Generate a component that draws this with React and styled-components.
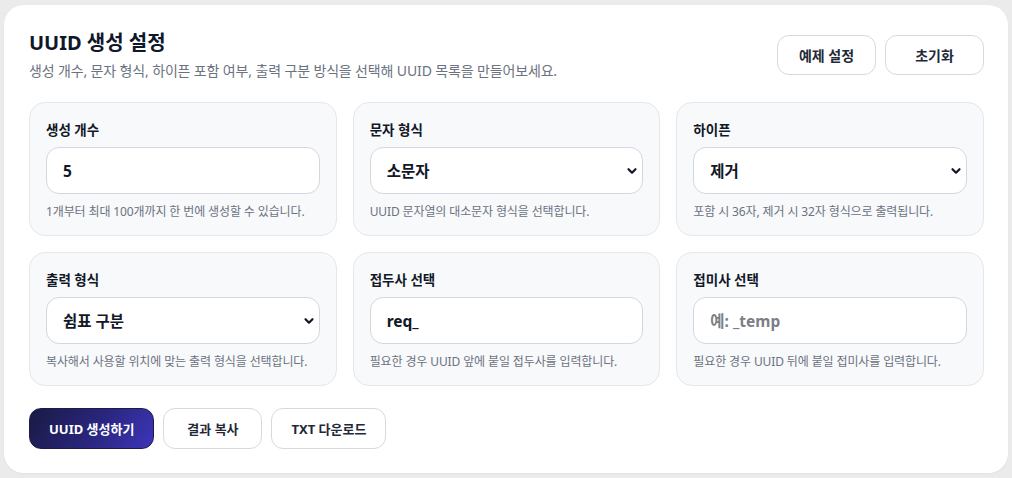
import React, { useState } from 'react';
import styled, { createGlobalStyle } from 'styled-components';

const GlobalStyle = createGlobalStyle`
  * {
    box-sizing: border-box;
  }
  body {
    margin: 0;
    background: #ebebec;
    font-family: 'Noto Sans', 'Noto Sans CJK KR', sans-serif;
  }
`;

const Page = styled.div`
  padding: 5px 4px;
`;

const Panel = styled.div`
  background: #ffffff;
  border-radius: 20px;
  padding: 24px 24px 24px 25px;
  box-shadow: 0 1px 3px rgba(0, 0, 0, 0.04);
`;

const Header = styled.div`
  display: flex;
  justify-content: space-between;
  align-items: center;
`;

const TitleBlock = styled.div`
  display: flex;
  flex-direction: column;
  gap: 4px;
`;

const Title = styled.h1`
  margin: 0;
  font-size: 20px;
  line-height: 28px;
  font-weight: 700;
  color: #0f172a;
`;

const Subtitle = styled.p`
  margin: 0;
  font-size: 14px;
  line-height: 20px;
  color: #6b7280;
  letter-spacing: -0.01em;
`;

const HeaderActions = styled.div`
  display: flex;
  gap: 9px;
`;

// $action: the larger run-buttons row under the grid
const Button = styled.button`
  height: ${(p) => (p.$action ? '41px' : '40px')};
  min-width: ${(p) => p.$minWidth || 'auto'};
  padding: 0 19px;
  border-radius: 12px;
  border: 1px solid ${(p) => (p.$primary ? '#1e1b4b' : '#d7d9de')};
  background: ${(p) =>
    p.$primary ? 'linear-gradient(120deg, #1a1a44 0%, #2a2680 55%, #3d35b8 100%)' : '#ffffff'};
  color: ${(p) => (p.$primary ? '#ffffff' : '#1f2937')};
  font-family: inherit;
  font-size: ${(p) => (p.$action ? '13px' : '14px')};
  font-weight: 700;
  cursor: pointer;
`;

const Grid = styled.div`
  display: grid;
  grid-template-columns: repeat(3, 1fr);
  gap: 16px;
  margin-top: 21px;
`;

const Field = styled.div`
  background: #f8f9fb;
  border: 1px solid #e4e7ec;
  border-radius: 16px;
  padding: 17px 16px 15px;
  display: flex;
  flex-direction: column;
`;

const Label = styled.label`
  font-size: 13.5px;
  line-height: 20px;
  font-weight: 700;
  color: #111827;
  margin-bottom: 7px;
`;

const Input = styled.input`
  width: 100%;
  height: 47px;
  padding: 0 16px;
  border: 1px solid #d4d7de;
  border-radius: 13px;
  background: #ffffff;
  font-family: inherit;
  font-size: 15.5px;
  font-weight: 700;
  color: #111827;
  outline: none;

  &::placeholder {
    color: #7b7f88;
    font-weight: 700;
  }
`;

const SelectWrap = styled.div`
  position: relative;
`;

const Select = styled.select`
  width: 100%;
  height: 47px;
  padding: 0 30px 0 16px;
  border: 1px solid #d4d7de;
  border-radius: 13px;
  background: #ffffff;
  appearance: none;
  font-family: inherit;
  font-size: 15.5px;
  font-weight: 700;
  color: #111827;
  outline: none;
`;

const Chevron = styled.svg`
  position: absolute;
  right: 5px;
  top: 50%;
  transform: translateY(-50%);
  pointer-events: none;
`;

const Hint = styled.p`
  margin: 10px 0 0;
  font-size: 12px;
  line-height: 16px;
  color: #6b7280;
  letter-spacing: -0.01em;
`;

const Actions = styled.div`
  display: flex;
  gap: 9px;
  margin-top: 22px;
`;

const ArrowDown = () => (
  <Chevron width="12" height="8" viewBox="0 0 12 8">
    <path d="M2.5 2.2l3.5 3.5 3.5-3.5" fill="none" stroke="#111827" strokeWidth="2.2" strokeLinecap="round" strokeLinejoin="round" />
  </Chevron>
);

const SelectField = ({ label, value, options, hint, onChange }) => (
  <Field>
    <Label>{label}</Label>
    <SelectWrap>
      <Select value={value} onChange={(e) => onChange(e.target.value)}>
        {options.map((o) => (
          <option key={o} value={o}>{o}</option>
        ))}
      </Select>
      <ArrowDown />
    </SelectWrap>
    <Hint>{hint}</Hint>
  </Field>
);

const App = () => {
  const [count, setCount] = useState('5');
  const [charCase, setCharCase] = useState('소문자');
  const [hyphen, setHyphen] = useState('제거');
  const [format, setFormat] = useState('쉼표 구분');
  const [prefix, setPrefix] = useState('req_');
  const [suffix, setSuffix] = useState('');

  return (
    <Page>
      <GlobalStyle />
      <Panel>
        <Header>
          <TitleBlock>
            <Title>UUID 생성 설정</Title>
            <Subtitle>생성 개수, 문자 형식, 하이픈 포함 여부, 출력 구분 방식을 선택해 UUID 목록을 만들어보세요.</Subtitle>
          </TitleBlock>
          <HeaderActions>
            <Button $minWidth="99px">예제 설정</Button>
            <Button $minWidth="99px">초기화</Button>
          </HeaderActions>
        </Header>

        <Grid>
          <Field>
            <Label>생성 개수</Label>
            <Input value={count} onChange={(e) => setCount(e.target.value)} />
            <Hint>1개부터 최대 100개까지 한 번에 생성할 수 있습니다.</Hint>
          </Field>
          <SelectField
            label="문자 형식"
            value={charCase}
            options={['소문자', '대문자']}
            hint="UUID 문자열의 대소문자 형식을 선택합니다."
            onChange={setCharCase}
          />
          <SelectField
            label="하이픈"
            value={hyphen}
            options={['포함', '제거']}
            hint="포함 시 36자, 제거 시 32자 형식으로 출력됩니다."
            onChange={setHyphen}
          />
          <SelectField
            label="출력 형식"
            value={format}
            options={['줄바꿈 구분', '쉼표 구분', 'JSON 배열']}
            hint="복사해서 사용할 위치에 맞는 출력 형식을 선택합니다."
            onChange={setFormat}
          />
          <Field>
            <Label>접두사 선택</Label>
            <Input value={prefix} onChange={(e) => setPrefix(e.target.value)} />
            <Hint>필요한 경우 UUID 앞에 붙일 접두사를 입력합니다.</Hint>
          </Field>
          <Field>
            <Label>접미사 선택</Label>
            <Input placeholder="예: _temp" value={suffix} onChange={(e) => setSuffix(e.target.value)} />
            <Hint>필요한 경우 UUID 뒤에 붙일 접미사를 입력합니다.</Hint>
          </Field>
        </Grid>

        <Actions>
          <Button $primary $action>UUID 생성하기</Button>
          <Button $action $minWidth="99px">결과 복사</Button>
          <Button $action>TXT 다운로드</Button>
        </Actions>
      </Panel>
    </Page>
  );
};

export default App;
